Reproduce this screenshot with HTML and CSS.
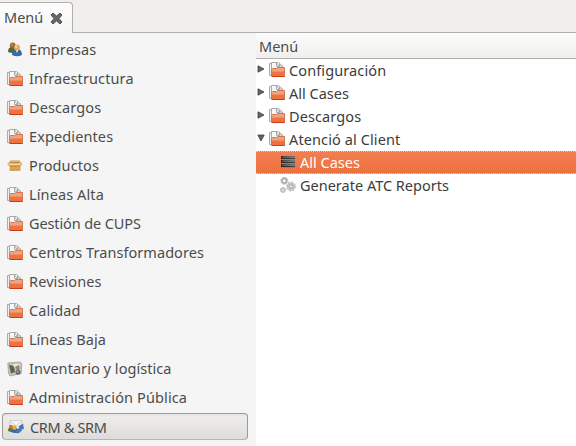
FILE: index.html
```html
<!DOCTYPE html>
<html lang="ca">
<head>
<meta charset="utf-8">
<title>Menú</title>
<link rel="stylesheet" href="styles.css">
</head>
<body>
<svg class="defs" width="0" height="0">
  <defs>
    <linearGradient id="orange" x1="0" y1="0" x2="0" y2="1"><stop offset="0" stop-color="#e9a684"/><stop offset=".4" stop-color="#f0a47e"/><stop offset=".5" stop-color="#ea7544"/><stop offset="1" stop-color="#f0713c"/></linearGradient>
    <linearGradient id="bar" x1="0" y1="0" x2="1" y2="0"><stop offset="0" stop-color="#252525"/><stop offset="1" stop-color="#777"/></linearGradient>
    <symbol id="folder" viewBox="0 0 16 16">
      <path d="M.5 13.5v-12H3M.5 13.5H3" fill="none" stroke="#aaa"/>
      <path d="M1 2h2v11H1z" fill="#eee"/>
      <path d="M2.5 13V.5h7l4 3.5v4h-11z" fill="#f8f8f8" stroke="#aaa"/>
      <path d="M7.5 1v3.5h3L7.5 1M10.5 1.5v2.5h3" fill="none" stroke="#999" stroke-width=".8"/>
      <path d="M2.5 14.5v-7l1-1h4l1-1h7v9z" fill="url(#orange)" stroke="#d9754d"/>
      <path d="M3 14.5h12.5" stroke="#cf3a16"/>
    </symbol>
    <symbol id="people" viewBox="0 0 16 16">
      <path d="M1 10q0-5 4.2-5T10 10q-4.5 2-9 0" fill="#53672b"/>
      <circle cx="5.7" cy="3.5" r="2.9" fill="#996838"/><circle cx="5" cy="2.8" r="1.2" fill="#b78958"/>
      <path d="M5 13q0-6 5-6t5 6q-5 2.5-10 0" fill="#3769ad"/>
      <path d="m8.8 8 1.2 3 1.4-3" fill="#eef4fa"/>
      <circle cx="10" cy="5.4" r="3" fill="#e8ab52"/><circle cx="9.4" cy="4.6" r="1.3" fill="#f8d17d"/>
    </symbol>
    <symbol id="box" viewBox="0 0 16 16">
      <path d="M2.5 7h11v5.5h-11z" fill="#dda451"/>
      <path d="m2.5 4 1-1.2h9l1 1.2 1.5 2.5-1.3 1H2l-1.3-1z" fill="#e7b76c" stroke="#d6a155" stroke-width=".7"/>
      <path d="M3.5 4.5h9" stroke="#a1763d" stroke-dasharray="2 1"/>
      <path d="M2 6.5h12" stroke="#f7d89c"/>
      <path d="M3 8.3h10M3 12.3h10" stroke="#c18335" stroke-width=".7"/>
    </symbol>
    <symbol id="stock" viewBox="0 0 16 16">
      <path d="m.8 2 12-1 2 1.5-.6 10L3 15 1.5 12z" fill="#c9c5b6" stroke="#99968a" stroke-width=".7"/>
      <path d="m2 4 5 1 1 6-4 1.5z" fill="#596255"/>
      <path d="m6 3.5 4-1 3 1-1 3H7z" fill="#e8e4d8"/>
      <path d="m8 6 4-2 .6 4-2 2z" fill="#898679"/>
      <circle cx="11" cy="11.3" r="2.5" fill="#6d6672"/><circle cx="10.7" cy="10.7" r="1" fill="#aaa1ad"/>
    </symbol>
    <symbol id="crm" viewBox="0 0 16 16">
      <path d="M2 1.5h12v9H2z" fill="#f6f6f6" stroke="#c8c8c8" stroke-width=".8"/>
      <path d="m2 2 6 5 6-5" fill="none" stroke="#c3c3c3" stroke-width=".8"/>
      <path d="M0 12q0-4 3-4t4 4q-3 2-7 0" fill="#647334"/>
      <circle cx="3" cy="7.8" r="2" fill="#bc7b31"/>
      <path d="M3 13q0-4 4-4t4 4q-4 2-8 0" fill="#326aac"/>
      <circle cx="6.5" cy="8.7" r="2.3" fill="#e5a53f"/>
      <path d="M9 14q-2-1-2-3 3 1 5-3l-1.5-.2L14.8 5l.7 5-1.2-.7Q13 14 9 14" fill="#437bbd" stroke="#2d5b98" stroke-width=".5"/>
    </symbol>
    <symbol id="list" viewBox="0 0 16 16">
      <g fill="url(#bar)"><rect x="1" y="2" width="14" height="3"/><rect x="1" y="6" width="14" height="3"/><rect x="1" y="10" width="14" height="3"/></g>
      <path d="M1 4.7h14M1 8.7h14M1 12.7h14" stroke="#222" stroke-width=".7"/>
      <path d="M2 3.2h12M2 7.2h12M2 11.2h12" stroke="#999" stroke-width=".6"/>
    </symbol>
    <symbol id="gears" viewBox="0 0 16 16">
      <g fill="none" stroke="#b4b4b4">
        <circle cx="4.3" cy="3.8" r="2.4" stroke-width="2.1"/><circle cx="4.3" cy="3.8" r="3.5" stroke-dasharray="1.4 1.35"/>
        <circle cx="11" cy="9.5" r="2.8" stroke-width="3" stroke="#c5c5c5"/><circle cx="11" cy="9.5" r="4.5" stroke-dasharray="1.8 1.7"/>
        <circle cx="11" cy="9.5" r="1.5" stroke="#999" stroke-width=".8"/>
        <circle cx="3" cy="13" r="1.7" stroke-width="2" stroke="#c5c5c5"/><circle cx="3" cy="13" r="2.5" stroke-dasharray="1 1"/>
      </g>
    </symbol>
  </defs>
</svg>
<header class="tabs">
  <div class="tab"><span class="label tab-label">Menú</span><svg class="close" viewBox="0 0 13 13"><path d="m1 3 2-2 3.5 3L10 1l2 2-3 3.5 3 3.5-2 2-3.5-3L3 12l-2-2 3-3.5z"/></svg></div>
</header>
<main class="content">
  <nav class="sidebar">
    <a class="item"><svg class="icon"><use href="#people"/></svg><span class="label">Empresas</span></a>
    <a class="item"><svg class="icon"><use href="#folder"/></svg><span class="label">Infraestructura</span></a>
    <a class="item"><svg class="icon"><use href="#folder"/></svg><span class="label">Descargos</span></a>
    <a class="item"><svg class="icon"><use href="#folder"/></svg><span class="label">Expedientes</span></a>
    <a class="item"><svg class="icon"><use href="#box"/></svg><span class="label">Productos</span></a>
    <a class="item"><svg class="icon"><use href="#folder"/></svg><span class="label">Líneas Alta</span></a>
    <a class="item"><svg class="icon"><use href="#folder"/></svg><span class="label caps">Gestión de CUPS</span></a>
    <a class="item"><svg class="icon"><use href="#folder"/></svg><span class="label long">Centros Transformadores</span></a>
    <a class="item"><svg class="icon"><use href="#folder"/></svg><span class="label">Revisiones</span></a>
    <a class="item"><svg class="icon"><use href="#folder"/></svg><span class="label">Calidad</span></a>
    <a class="item"><svg class="icon"><use href="#folder"/></svg><span class="label plain">Líneas Baja</span></a>
    <a class="item"><svg class="icon"><use href="#stock"/></svg><span class="label long">Inventario y logística</span></a>
    <a class="item"><svg class="icon"><use href="#folder"/></svg><span class="label">Administración Pública</span></a>
    <a class="item active"><svg class="icon"><use href="#crm"/></svg><span class="label acronyms">CRM &amp; SRM</span></a>
  </nav>
  <section class="tree">
    <div class="tree-head"><span class="label plain">Menú</span></div>
    <div class="row"><svg class="arrow" viewBox="0 0 8 8"><path d="M1 .8v6.4L7 4z"/></svg><svg class="icon"><use href="#folder"/></svg><span class="label">Configuración</span></div>
    <div class="row"><svg class="arrow" viewBox="0 0 8 8"><path d="M1 .8v6.4L7 4z"/></svg><svg class="icon"><use href="#folder"/></svg><span class="label plain">All Cases</span></div>
    <div class="row"><svg class="arrow" viewBox="0 0 8 8"><path d="M1 .8v6.4L7 4z"/></svg><svg class="icon"><use href="#folder"/></svg><span class="label">Descargos</span></div>
    <div class="row"><svg class="arrow" viewBox="0 0 8 8"><path d="M.8 1h6.4L4 7z"/></svg><svg class="icon"><use href="#folder"/></svg><span class="label">Atenció al Client</span></div>
    <div class="row child selected"><svg class="icon"><use href="#list"/></svg><span class="label plain">All Cases</span></div>
    <div class="row child"><svg class="icon"><use href="#gears"/></svg><span class="label plain">Generate ATC Reports</span></div>
  </section>
</main>
</body>
</html>
```
FILE: styles.css
```css
* { box-sizing: border-box; }
body {
  margin: 0; width: 576px; height: 446px; overflow: hidden;
  display: flex; flex-direction: column;
  background: #f5f5f5; color: #4c4c4c;
  font: 14.5px/20px "Noto Sans", "Open Sans", sans-serif;
}
.defs { position: absolute; }
.label { white-space: nowrap; letter-spacing: .11px; }
.label.long { letter-spacing: .05px; }
.label.plain, .label.tab-label { letter-spacing: 0; }
.label.caps { letter-spacing: -.12px; }
.label.acronyms { letter-spacing: -.35px; }
.tabs { height: 33px; flex: none; background: #f0efee; border-bottom: 1px solid #b3afa9; }
.tab {
  width: 73px; height: 31px; margin: 2px 0 -1px; padding: 0 0 1px 4px;
  display: flex; align-items: center; gap: 7px;
  background: linear-gradient(#fdfdfd, #f5f5f5);
  border: 1px solid #b3afa9; border-width: 1px 1px 0 0; border-radius: 0 4px 0 0;
}
.tab .label { margin-bottom: 2px; }
.close { width: 13px; height: 13px; margin-top: 1px; fill: #666; stroke: #484848; stroke-width: .9; }
.content { flex: 1; min-height: 0; display: flex; }
.sidebar { width: 256px; flex: none; padding-top: 2px; }
.item { height: 29px; padding-left: 7px; display: flex; align-items: center; gap: 6px; }
.item .label { margin-bottom: 2px; }
.icon { width: 16px; height: 16px; flex: none; }
.active {
  width: 246px; height: 27px; margin: 1px 0 0 2px; padding-left: 5px; padding-top: 1px;
  border: 1px solid #9e9993; border-bottom-color: #b8b4af; border-radius: 4px;
  background: linear-gradient(#e2e1e0, #eeedec 3px, #dddcda);
}
.item.active .label { margin-bottom: 0; }
.tree { flex: 1; background: #fff; color: #3c3c3c; }
.tree-head { height: 26px; padding: 3px 0 0 3px; border-bottom: 1px solid #b3afa9; background: linear-gradient(#fcfcfc, #f0efee); color: #4c4c4c; }
.row { height: 23px; display: flex; align-items: center; padding-left: 1px; }
.row .label { margin: 0 0 2px 4px; }
.arrow { width: 8px; height: 8px; margin: -3px 4px 0 0; flex: none; fill: #666; stroke: #3c3c3c; stroke-width: .8; }
.row .icon { margin-top: -1px; }
.child { padding-left: 24px; }
.selected { color: #fff; background: linear-gradient(#f37e50, #ed713f); border: dotted #f8bfa5; border-width: 1px 0; }
```
